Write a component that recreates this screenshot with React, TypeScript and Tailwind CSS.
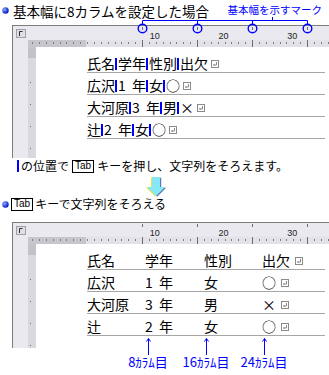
import React from 'react';

const CW = 6.875;

function Bullet({ className = '' }: { className?: string }) {
  return (
    <svg width="7" height="7" viewBox="0 0 7 7" className={className}>
      <defs>
        <radialGradient id="bl" cx="35%" cy="35%" r="65%">
          <stop offset="0%" stopColor="#8fa8ff" />
          <stop offset="100%" stopColor="#0018c8" />
        </radialGradient>
      </defs>
      <circle cx="3.5" cy="3.5" r="3.2" fill="url(#bl)" />
    </svg>
  );
}

function TabKey({ className = '' }: { className?: string }) {
  return (
    <span
      className={`inline-flex h-[13px] items-center justify-center border border-black px-[2px] font-['Liberation_Sans',sans-serif] text-[10px] leading-none ${className}`}
    >
      Tab
    </span>
  );
}

function Ret({ className = '' }: { className?: string }) {
  return (
    <svg width="8" height="8" viewBox="0 0 8 8" className={className}>
      <rect x="0.5" y="0.5" width="7" height="7" fill="none" stroke="#8a8a8a" />
      <path d="M5.5 2v3H2.5M3.5 4l-1 1 1 1" fill="none" stroke="#8a8a8a" />
    </svg>
  );
}

function Bar() {
  return <span className="mb-[1px] mr-[1px] inline-block h-[12px] w-[2px] shrink-0 bg-[#0000ff]" />;
}

function RulerMarks() {
  const xs: number[] = [];
  for (let k = -8; k <= 36; k++) {
    const x = Math.round(74 + k * CW);
    if (x > 16 && x < 316) xs.push(x);
  }
  return (
    <svg className="absolute left-0 top-0" width="316" height="21">
      {xs.map((x) => (
        <rect key={x} x={x} y={16} width={1} height={2} fill="#7c7c84" />
      ))}
      {[8, 16, 24, 32].map((k) => {
        const x = Math.round(74 + k * CW);
        return (
          <g key={k}>
            <rect x={x} y={1} width={1} height={3} fill="#6c6c74" />
            <rect x={x} y={14} width={1} height={7} fill="#6c6c74" />
          </g>
        );
      })}
      {[10, 20, 30].map((k) => (
        <text
          key={k}
          x={73 + k * CW}
          y={13}
          fontSize={9}
          textAnchor="middle"
          fontFamily="Liberation Sans, sans-serif"
          fill="#222"
        >
          {k}
        </text>
      ))}
    </svg>
  );
}

function Window({ height, children }: { height: string; children: React.ReactNode }) {
  return (
    <div className={`ml-[12px] flex flex-col overflow-hidden border-l border-t border-[#7c7c7c] bg-[#e9e9ef] ${height}`}>
      <div className="relative h-[21px] shrink-0">
        <div className="flex h-[14px] items-start">
          <div className="ml-[3px] mt-[3px] flex h-[9px] w-[10px] border border-[#a0a0a8] bg-[#dedee4]">
            <svg width="8" height="7" viewBox="0 0 8 7">
              <path d="M2.5 6V1.5H5.5" fill="none" stroke="#303030" />
            </svg>
          </div>
        </div>
        <div className="flex h-[7px]">
          <div className="w-[15px]" />
          <div className="w-[58px] bg-[#c6c6cc]" />
          <div className="flex-1 bg-[#e2e2e8]" />
        </div>
        <RulerMarks />
      </div>
      <div className="flex min-h-0 flex-1">
        <div className="w-[15px]" />
        <div className="relative flex w-[8px] flex-col">
          <div className="h-[11px] bg-[#c2c2c8]" />
          <div className="flex-1 bg-[#d8d8de]" />
          <svg className="absolute left-0 top-0" width="8" height="200">
            {[35, 57, 79, 101].map((y) => (
              <rect key={y} x={2} y={y} width={1} height={1} fill="#6c6c74" />
            ))}
          </svg>
        </div>
        <div className="flex-1 bg-white pl-[51px] pr-[4px] pt-[4px]">{children}</div>
      </div>
    </div>
  );
}

function Half({ c }: { c: string }) {
  return <span className="inline-block w-[14px]">{c}</span>;
}

function Full({ c }: { c: string }) {
  return <span className="inline-block w-[14px] text-center">{c}</span>;
}

const rowCls = 'flex h-[22px] items-end border-b border-[#a6a6a6] pb-[1px] text-[14px] leading-[16px]';

const data = [
  { name: '氏名', grade: null, sex: '性別', att: '出欠' },
  { name: '広沢', grade: '1', sex: '女', att: '○' },
  { name: '大河原', grade: '3', sex: '男', att: '×' },
  { name: '辻', grade: '2', sex: '女', att: '○' },
];

function Grade({ g }: { g: string | null }) {
  if (!g) return <span>学年</span>;
  return (
    <span className="flex">
      <Half c={g} />
      <span>年</span>
    </span>
  );
}

function Att({ a }: { a: string }) {
  return a.length > 1 ? <span>{a}</span> : <Full c={a} />;
}

export default function App() {
  return (
    <div className="relative h-[375px] w-[329px] overflow-hidden bg-white font-['Noto_Sans_CJK_JP',sans-serif] text-black">
      {/* title */}
      <div className="flex h-[25px] items-start pt-[2px]">
        <Bullet className="ml-[2px] mt-[5px]" />
        <span className="ml-[4px] text-[13.5px] leading-[18px]">基本幅に8カラムを設定した場合</span>
        <span className="ml-auto mr-[7px] text-[10.5px] leading-[16px] text-[#0000ff]">基本幅を示すマーク</span>
      </div>

      <Window height="h-[133px]">
        {data.map((r) => (
          <div key={r.name} className={rowCls}>
            <span>{r.name}</span>
            <Bar />
            <Grade g={r.grade} />
            <Bar />
            <span>{r.sex}</span>
            <Bar />
            <Att a={r.att} />
            <Ret className="mb-[3px] ml-[3px]" />
          </div>
        ))}
      </Window>

      {/* caption */}
      <div className="flex h-[16px] items-center pl-[17px] text-[12px] leading-[16px]">
        <span className="h-[12px] w-[2px] bg-[#0000ff]" />
        <span className="ml-[2px]">の位置で</span>
        <TabKey className="mx-[3px]" />
        <span>キーを押し、文字列をそろえます。</span>
      </div>

      {/* down arrow */}
      <div className="h-[22px] pl-[144px] pt-[3px]">
        <svg width="22" height="20" viewBox="0 0 22 20">
          <path d="M8 0h8v10h5l-9 9-9-9h5z" fill="#5a7ab8" transform="translate(1.2 0.8)" />
          <path d="M8 0h8v10h5l-9 9-9-9h5z" fill="#f2e23a" transform="translate(-1 0.6)" />
          <path d="M8 0h8v10h5l-9 9-9-9h5z" fill="#86e8f6" />
        </svg>
      </div>

      {/* header 2 */}
      <div className="flex h-[16px] items-center text-[12px] leading-[16px]">
        <Bullet className="ml-[2px]" />
        <TabKey className="ml-[2px] mr-[2px]" />
        <span>キーで文字列をそろえる</span>
      </div>

      <div className="h-[10px]" />

      <Window height="h-[126px]">
        {data.map((r) => (
          <div key={r.name} className={rowCls}>
            <div className="grid grid-cols-[58px_59px_58px_1fr] items-end">
              <span>{r.name}</span>
              <Grade g={r.grade} />
              <span>{r.sex}</span>
              <span className="flex items-end">
                <Att a={r.att} />
                <Ret className="mb-[3px] ml-[5px]" />
              </span>
            </div>
          </div>
        ))}
      </Window>

      {/* column labels */}
      <div className="mt-[6px] flex h-[16px] text-[13px] leading-[16px] text-[#0000ff]">
        <span className="ml-[126px] w-[44px] text-center">8ｶﾗﾑ目</span>
        <span className="ml-[11px] w-[50px] text-center">16ｶﾗﾑ目</span>
        <span className="ml-[8px] w-[50px] text-center">24ｶﾗﾑ目</span>
      </div>

      {/* annotations over the rulers / page */}
      <svg className="pointer-events-none absolute left-0 top-0" width="329" height="375">
        <g fill="none" stroke="#0000ff">
          <path d="M142.5 24V20.5H307.5V24M197.5 20.5V24M252.5 20.5V24M272.5 20.5V17" />
          {[142.5, 197.5, 252.5, 307.5].map((x) => (
            <circle key={x} cx={x} cy={28.5} r={4.3} strokeWidth={1.4} />
          ))}
          {[148.5, 206.5, 264.5].map((x) => (
            <path key={x} d={`M${x} 338.5V355M${x - 2} 341.5L${x} 338.5L${x + 2} 341.5`} />
          ))}
        </g>
      </svg>
    </div>
  );
}
